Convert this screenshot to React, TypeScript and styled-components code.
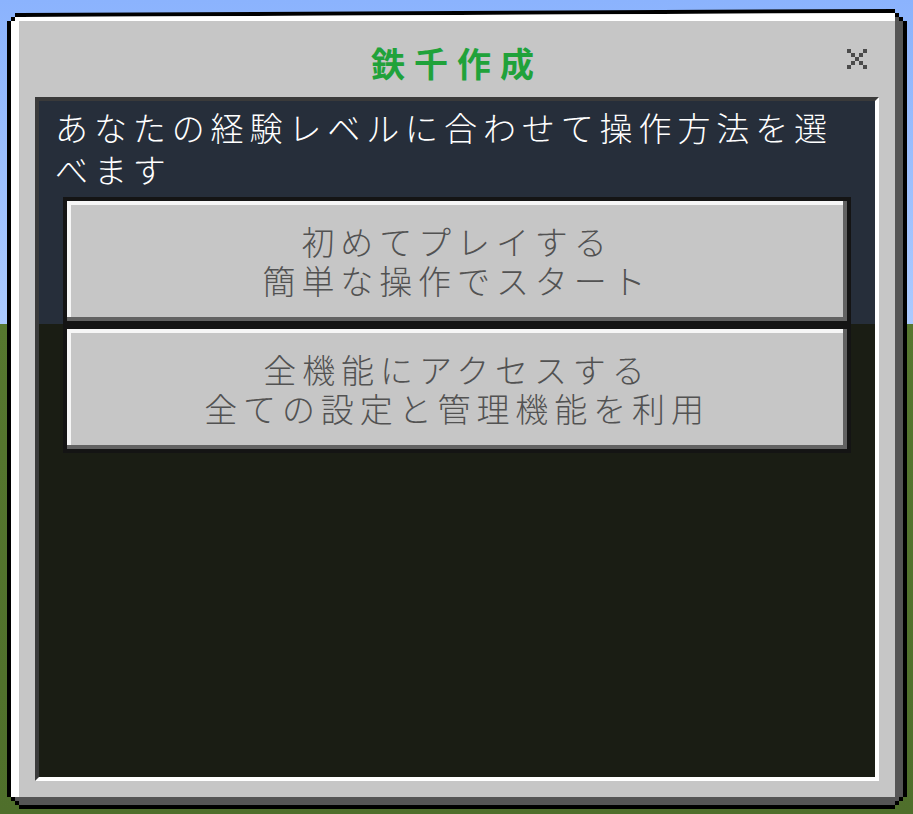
import * as React from 'react';
import styled, { createGlobalStyle } from 'styled-components';

// stepped "pixel" corners for the frame outline
const stepped = (k: number, s: number) => {
    const R = (n: number) => (n === 0 ? '100%' : `calc(100% - ${n}px)`);
    const pts: string[] = [];
    for (let i = 0; i < k; i++) {
        pts.push(`${R((k - i) * s)} ${i * s}px`, `${R((k - i) * s)} ${(i + 1) * s}px`);
    }
    pts.push(`100% ${k * s}px`);
    for (let i = 0; i < k; i++) {
        pts.push(`${R(i * s)} ${R((k - i) * s)}`, `${R((i + 1) * s)} ${R((k - i) * s)}`);
    }
    pts.push(`${R(k * s)} 100%`);
    for (let i = 0; i < k; i++) {
        pts.push(`${(k - i) * s}px ${R(i * s)}`, `${(k - i) * s}px ${R((i + 1) * s)}`);
    }
    pts.push(`0 ${R(k * s)}`);
    for (let i = 0; i < k; i++) {
        pts.push(`${i * s}px ${(k - i) * s}px`, `${(i + 1) * s}px ${(k - i) * s}px`);
    }
    return `polygon(${pts.join(', ')})`;
};

const GlobalStyle = createGlobalStyle`
    html, body {
        margin: 0;
        padding: 0;
    }

    body {
        font-family: "Noto Sans CJK JP", "Noto Sans", sans-serif;
    }
`;

const options = [
    { lines: ['初めてプレイする', '簡単な操作でスタート'] },
    { lines: ['全機能にアクセスする', '全ての設定と管理機能を利用'] },
];

const CloseIcon = () => (
    <svg width="20" height="20" viewBox="0 0 20 20" shapeRendering="crispEdges">
        {[[0, 0], [16, 0], [4, 4], [12, 4], [8, 8], [4, 12], [12, 12], [0, 16], [16, 16]].map(([x, y]) => (
            <rect key={`${x}-${y}`} x={x} y={y} width="4" height="4" fill="#4b4b4b" />
        ))}
    </svg>
);

const App = () => {
    return (
        <Page>
            <GlobalStyle />
            <Frame>
                <Bevel>
                    <TitleBar>
                        <Title>鉄千作成</Title>
                        <Close aria-label="閉じる">
                            <CloseIcon />
                        </Close>
                    </TitleBar>

                    <Panel>
                        <Description>あなたの経験レベルに合わせて操作方法を選べます</Description>

                        <OptionList>
                            {options.map((o) => (
                                <Option key={o.lines[0]}>
                                    <OptionText>
                                        {o.lines[0]}
                                        <br />
                                        {o.lines[1]}
                                    </OptionText>
                                </Option>
                            ))}
                        </OptionList>
                    </Panel>
                </Bevel>
            </Frame>
        </Page>
    );
};

export default App;

const Page = styled.div`
    box-sizing: border-box;
    width: 100%;
    height: 814px;
    padding: 9px 6px 5px 7px;

    background: linear-gradient(
        to bottom,
        #8bb3fd 0,
        #abcaff 324px,
        #56772f 324px,
        #4f6f2b 814px
    );
`;

const Frame = styled.div`
    box-sizing: border-box;
    width: 900px;
    height: 800px;
    padding: 4px;

    background: #000;
    clip-path: ${stepped(3, 4)};
`;

const Bevel = styled.div`
    box-sizing: border-box;
    height: 100%;
    padding: 8px;

    display: flex;
    flex-direction: column;

    background: #c6c6c6;
    box-shadow: inset -8px -8px 0 #555555, inset 8px 8px 0 #ffffff;
    clip-path: ${stepped(2, 4)};
`;

const TitleBar = styled.div`
    position: relative;
    height: 76px;
    flex: none;

    display: flex;
    justify-content: center;
    align-items: flex-start;
`;

const Title = styled.h1`
    margin: 0;
    padding-top: 22px;

    font-family: "Noto Sans CJK JP", sans-serif;
    font-size: 34px;
    font-weight: 700;
    line-height: 40px;
    letter-spacing: 9px;
    color: #20a23a;
`;

const Close = styled.button`
    position: absolute;
    top: 28px;
    right: 28px;

    width: 20px;
    height: 20px;
    padding: 0;

    display: flex;
    background: none;
    border: none;
    cursor: pointer;
`;

const Panel = styled.div`
    flex: 1;
    margin: 0 16px 16px;

    display: flex;
    flex-direction: column;

    border-style: solid;
    border-width: 4px;
    border-color: #3a3a3a #ffffff #ffffff #3a3a3a;

    background: linear-gradient(to bottom, #262e3a 0, #262e3a 223px, #1a1d14 223px);
`;

const Description = styled.p`
    margin: 0;
    padding: 5px 18px 0 16px;

    font-size: 33px;
    font-weight: 300;
    line-height: 42px;
    letter-spacing: 5.9px;
    color: #ffffff;
`;

const OptionList = styled.div`
    margin-top: 7px;
    padding: 0 24px;

    display: flex;
    flex-direction: column;
`;

const Option = styled.button`
    box-sizing: border-box;
    width: 100%;
    height: 128px;
    padding: 0;

    display: flex;
    justify-content: center;
    align-items: center;

    background: #c6c6c6;
    border: 4px solid #141414;
    box-shadow: inset -4px -4px 0 #626262, inset 4px 4px 0 #f6f6f6;

    font-family: "Noto Sans CJK JP", sans-serif;
    cursor: pointer;
`;

const OptionText = styled.span`
    font-size: 33px;
    font-weight: 300;
    line-height: 39px;
    letter-spacing: 5.9px;
    text-align: center;
    color: #525252;
`;
